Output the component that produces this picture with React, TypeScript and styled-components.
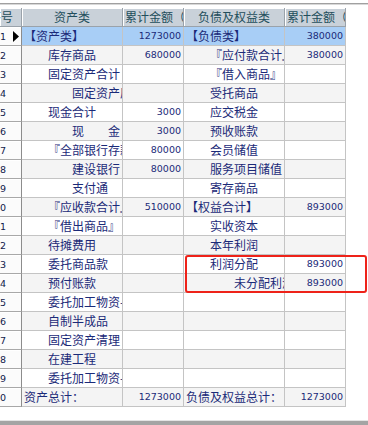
import React from "react";
import styled, { createGlobalStyle } from "styled-components";

const Global = createGlobalStyle`
  html, body { margin: 0; padding: 0; background: #ffffff; }
  body { font-family: "Noto Sans CJK SC", "Noto Sans", sans-serif; }
`;

const Page = styled.div`
  width: 368px;
  height: 425px;
  display: flex;
  flex-direction: column;
  overflow: hidden;
  background: #ffffff;
`;

const TopStrip = styled.div`
  height: 8px;
  box-sizing: border-box;
  border-top: 3px solid #ffffff;
  display: flex;
  flex-direction: column;
  &::before {
    content: "";
    display: block;
    height: 1px;
    background: #a0a0a0;
  }
  &::after {
    content: "";
    display: block;
    height: 1px;
    background: #d8d8d8;
  }
`;

const GridWrap = styled.div`
  position: relative;
  flex: 0 0 auto;
`;

const Grid = styled.div`
  display: grid;
  grid-template-columns: 22px 101px 61px 101px 61px;
  grid-auto-rows: 19px;
  width: 346px;
`;

const HeadCell = styled.div<{ $align: "center" | "left" | "right" }>`
  box-sizing: border-box;
  background: #c9d1d9;
  border-right: 1px solid #9aa2aa;
  border-bottom: 1px solid #9aa2aa;
  box-shadow: inset 1px 1px 0 #ffffff;
  color: #234e5c;
  font-size: 12px;
  line-height: 18px;
  white-space: nowrap;
  overflow: hidden;
  display: flex;
  justify-content: ${(p) =>
    p.$align === "center" ? "center" : p.$align === "left" ? "flex-start" : "flex-end"};
  padding: ${(p) => (p.$align === "right" ? "0 8px 0 0" : p.$align === "left" ? "0 0 0 2px" : "0")};
`;

const NumCell = styled.div`
  box-sizing: border-box;
  background: #fbfbfb;
  border-right: 1px solid #8c8c8c;
  border-bottom: 1px solid #a8a8a8;
  box-shadow: inset 0 1px 0 #ffffff;
  display: flex;
  align-items: center;
  overflow: hidden;
  color: #10204a;
  font-family: "DejaVu Sans", sans-serif;
  font-size: 9.5px;
`;

const NumText = styled.div`
  width: 6px;
  flex: 0 0 6px;
  display: flex;
  justify-content: flex-end;
  white-space: nowrap;
`;

const Pointer = styled.svg`
  margin-left: 7px;
  flex: 0 0 auto;
`;

const Cell = styled.div<{ $bg: string; $indent: number }>`
  box-sizing: border-box;
  background: ${(p) => p.$bg};
  border-right: 1px solid #c4c4c4;
  border-bottom: 1px solid #c4c4c4;
  color: #1b2a78;
  font-size: 12px;
  line-height: 18px;
  white-space: nowrap;
  overflow: hidden;
  padding-left: ${(p) => 2 + p.$indent * 24}px;
`;

const AmountCell = styled.div<{ $bg: string }>`
  box-sizing: border-box;
  background: ${(p) => p.$bg};
  border-right: 1px solid #c4c4c4;
  border-bottom: 1px solid #c4c4c4;
  color: #1b2a78;
  font-family: "DejaVu Sans", sans-serif;
  font-size: 9.5px;
  line-height: 18px;
  white-space: nowrap;
  overflow: hidden;
  text-align: right;
  padding-right: 2px;
`;

const Highlight = styled.div`
  position: absolute;
  left: 185px;
  top: 247px;
  width: 182px;
  height: 38px;
  box-sizing: border-box;
  border: 2px solid #ee2219;
  border-radius: 3px;
  pointer-events: none;
`;

const Spacer = styled.div`
  flex: 1 1 auto;
`;

const BottomBar = styled.div`
  height: 4px;
  border-top: 1px solid #e4e4e4;
  background: #a4a4a4;
`;

type Entry = [number, string, string];

const left: Entry[] = [
  [0, "【资产类】", "1273000"],
  [1, "库存商品", "680000"],
  [1, "固定资产合计", ""],
  [2, "固定资产原值", ""],
  [1, "现金合计", "3000"],
  [2, "现　　金", "3000"],
  [1, "『全部银行存款』", "80000"],
  [2, "建设银行", "80000"],
  [2, "支付通", ""],
  [1, "『应收款合计』", "510000"],
  [1, "『借出商品』", ""],
  [1, "待摊费用", ""],
  [1, "委托商品款", ""],
  [1, "预付账款", ""],
  [1, "委托加工物资-发出", ""],
  [1, "自制半成品", ""],
  [1, "固定资产清理", ""],
  [1, "在建工程", ""],
  [1, "委托加工物资-收回", ""],
  [0, "资产总计：", "1273000"],
];

const right: Entry[] = [
  [0, "【负债类】", "380000"],
  [1, "『应付款合计』", "380000"],
  [1, "『借入商品』", ""],
  [1, "受托商品", ""],
  [1, "应交税金", ""],
  [1, "预收账款", ""],
  [1, "会员储值", ""],
  [1, "服务项目储值", ""],
  [1, "寄存商品", ""],
  [0, "【权益合计】", "893000"],
  [1, "实收资本", ""],
  [1, "本年利润", ""],
  [1, "利润分配", "893000"],
  [2, "未分配利润", "893000"],
  [1, "", ""],
  [1, "", ""],
  [1, "", ""],
  [1, "", ""],
  [1, "", ""],
  [0, "负债及权益总计：", "1273000"],
];

function rowBg(i: number): string {
  if (i === 0) return "#a8cef6";
  return i % 2 === 1 ? "#f4f4f4" : "#ffffff";
}

export default function App() {
  return (
    <>
      <Global />
      <Page>
        <TopStrip />
        <GridWrap>
          <Grid>
            <HeadCell $align="right">序号</HeadCell>
            <HeadCell $align="center">资产类</HeadCell>
            <HeadCell $align="left">累计金额（元）</HeadCell>
            <HeadCell $align="center">负债及权益类</HeadCell>
            <HeadCell $align="left">累计金额（元）</HeadCell>
            {left.map((l, i) => {
              const r = right[i];
              const bg = rowBg(i);
              return (
                <React.Fragment key={i}>
                  <NumCell>
                    <NumText>{i + 1}</NumText>
                    {i === 0 && (
                      <Pointer width="6" height="11" viewBox="0 0 6 11">
                        <path d="M0 0 L6 5.5 L0 11 Z" fill="#000000" />
                      </Pointer>
                    )}
                  </NumCell>
                  <Cell $bg={bg} $indent={l[0]}>{l[1]}</Cell>
                  <AmountCell $bg={bg}>{l[2]}</AmountCell>
                  <Cell $bg={bg} $indent={r[0]}>{r[1]}</Cell>
                  <AmountCell $bg={bg}>{r[2]}</AmountCell>
                </React.Fragment>
              );
            })}
          </Grid>
          <Highlight />
        </GridWrap>
        <Spacer />
        <BottomBar />
      </Page>
    </>
  );
}
